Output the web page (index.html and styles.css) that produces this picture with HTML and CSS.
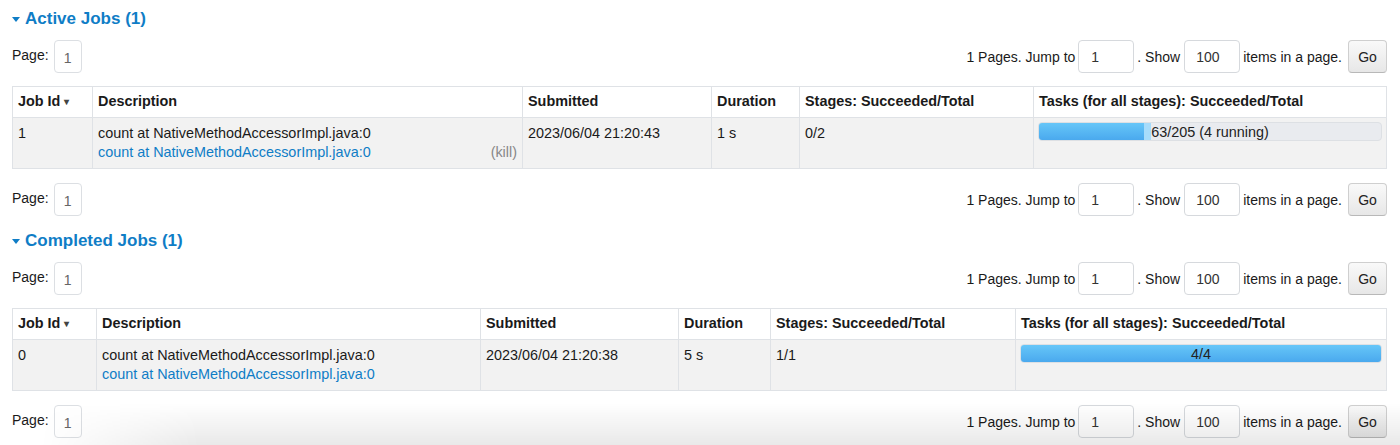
FILE: index.html
```html
<!DOCTYPE html>
<html>
<head>
<meta charset="utf-8">
<link rel="stylesheet" href="styles.css">
</head>
<body>
<div class="page">
  <h4 class="section-title"><span class="arrow"></span>Active Jobs (1)</h4>
  <div class="pager pager-top">
    <div class="pager-left"><span>Page:</span><span class="page-box">1</span></div>
    <div class="pager-right">
      <span>1 Pages. Jump to</span><span class="input">1</span><span>. Show</span><span class="input">100</span><span>items in a page.</span><span class="go">Go</span>
    </div>
  </div>
  <table class="jobs jobs-active">
    <colgroup><col class="a1"><col class="a2"><col class="a3"><col class="a4"><col class="a5"><col class="a6"></colgroup>
    <thead>
      <tr><th>Job Id <span class="sort">&#9662;</span></th><th>Description</th><th>Submitted</th><th>Duration</th><th>Stages: Succeeded/Total</th><th>Tasks (for all stages): Succeeded/Total</th></tr>
    </thead>
    <tbody>
      <tr>
        <td>1</td>
        <td><div>count at NativeMethodAccessorImpl.java:0</div><div class="desc-line"><a class="link">count at NativeMethodAccessorImpl.java:0</a><span class="kill">(kill)</span></div></td>
        <td>2023/06/04 21:20:43</td>
        <td>1 s</td>
        <td>0/2</td>
        <td class="task-cell"><div class="progress"><span class="progress-text">63/205 (4 running)</span><div class="bar done" style="width:30.73%"></div><div class="bar started" style="width:1.95%"></div></div></td>
      </tr>
    </tbody>
  </table>
  <div class="pager pager-bottom">
    <div class="pager-left"><span>Page:</span><span class="page-box">1</span></div>
    <div class="pager-right">
      <span>1 Pages. Jump to</span><span class="input">1</span><span>. Show</span><span class="input">100</span><span>items in a page.</span><span class="go">Go</span>
    </div>
  </div>

  <h4 class="section-title second"><span class="arrow"></span>Completed Jobs (1)</h4>
  <div class="pager pager-top">
    <div class="pager-left"><span>Page:</span><span class="page-box">1</span></div>
    <div class="pager-right">
      <span>1 Pages. Jump to</span><span class="input">1</span><span>. Show</span><span class="input">100</span><span>items in a page.</span><span class="go">Go</span>
    </div>
  </div>
  <table class="jobs jobs-done">
    <colgroup><col class="b1"><col class="b2"><col class="b3"><col class="b4"><col class="b5"><col class="b6"></colgroup>
    <thead>
      <tr><th>Job Id <span class="sort">&#9662;</span></th><th>Description</th><th>Submitted</th><th>Duration</th><th>Stages: Succeeded/Total</th><th>Tasks (for all stages): Succeeded/Total</th></tr>
    </thead>
    <tbody>
      <tr>
        <td>0</td>
        <td><div>count at NativeMethodAccessorImpl.java:0</div><div class="desc-line"><a class="link">count at NativeMethodAccessorImpl.java:0</a></div></td>
        <td>2023/06/04 21:20:38</td>
        <td>5 s</td>
        <td>1/1</td>
        <td class="task-cell"><div class="progress"><span class="progress-text">4/4</span><div class="bar done" style="width:100%"></div></div></td>
      </tr>
    </tbody>
  </table>
  <div class="pager pager-bottom">
    <div class="pager-left"><span>Page:</span><span class="page-box">1</span></div>
    <div class="pager-right">
      <span>1 Pages. Jump to</span><span class="input">1</span><span>. Show</span><span class="input">100</span><span>items in a page.</span><span class="go">Go</span>
    </div>
  </div>
</div>
<div class="shade"></div>
</body>
</html>
```
FILE: styles.css
```css
html, body {
  margin: 0;
  padding: 0;
  background: #fff;
}
body {
  font-family: "Liberation Sans", Arial, Helvetica, sans-serif;
  font-size: 14px;
  color: #1a1a1a;
}
.page {
  padding: 8px 13px 0 12px;
  display: flex;
  flex-direction: column;
}
.section-title {
  margin: 0;
  font-size: 17px;
  line-height: 22px;
  font-weight: bold;
  color: #0f7dc6;
  display: flex;
  align-items: center;
}
.section-title.second {
  margin-top: 14px;
}
.arrow {
  width: 0;
  height: 0;
  border-left: 4.5px solid transparent;
  border-right: 4.5px solid transparent;
  border-top: 5px solid #0f7dc6;
  margin-right: 5px;
  margin-top: 1px;
}
.pager {
  display: flex;
  justify-content: space-between;
  align-items: center;
  height: 33px;
}
.pager-top {
  margin: 10px 0 13px;
}
.pager-bottom {
  margin-top: 14px;
}
.pager-left, .pager-right {
  display: flex;
  align-items: center;
  height: 33px;
}
.pager-left span:first-child {
  margin-top: -3px;
}
.page-box {
  box-sizing: border-box;
  width: 28px;
  height: 33px;
  margin-left: 5px;
  border: 1px solid #dcdfe3;
  border-radius: 4px;
  display: flex;
  align-items: center;
  justify-content: center;
  color: #666;
  padding-top: 3px;
}
.input {
  box-sizing: border-box;
  width: 56px;
  height: 33px;
  border: 1px solid #d6d9dd;
  border-radius: 4px;
  display: flex;
  align-items: center;
  padding-left: 12px;
  margin: 0 3px;
  color: #333;
}
.input + span + .input {
  padding-left: 11px;
}
.pager-right .input:nth-child(4) {
  margin-left: 4px;
}
.go {
  box-sizing: border-box;
  width: 39px;
  height: 33px;
  margin-left: 6px;
  border: 1px solid #cfcfcf;
  border-bottom-color: #b8b8b8;
  border-radius: 4px;
  background: linear-gradient(#f9f9f9, #e7e7e7);
  display: flex;
  align-items: center;
  justify-content: center;
  color: #222;
}
.jobs {
  width: 100%;
  table-layout: fixed;
  border-collapse: collapse;
  border: 1px solid #dfe2e6;
  font-size: 14.4px;
}
.jobs th, .jobs td {
  border: 1px solid #dfe2e6;
  padding: 6px 5px;
  line-height: 19px;
  text-align: left;
  vertical-align: top;
  white-space: nowrap;
  overflow: hidden;
}
.jobs th {
  font-weight: bold;
  background: #fff;
  padding-top: 5px;
  padding-bottom: 6px;
}
.jobs tbody tr {
  background: #f2f2f2;
}
.jobs thead tr {
  height: 31px;
}
.jobs tbody tr {
  height: 49px;
}
.sort {
  font-size: 10px;
  color: #444;
  vertical-align: 1px;
}
.a1 { width: 80px; }
.a2 { width: 430px; }
.a3 { width: 189px; }
.a4 { width: 88px; }
.a5 { width: 234px; }
.a6 { width: auto; }
.b1 { width: 84px; }
.b2 { width: 384px; }
.b3 { width: 198px; }
.b4 { width: 92px; }
.b5 { width: 245px; }
.b6 { width: auto; }
.desc-line {
  display: flex;
  justify-content: space-between;
}
.link {
  color: #0f7dc6;
  text-decoration: none;
}
.kill {
  color: #888;
}
.jobs td.task-cell {
  padding: 4px 4px 6px;
}
.progress {
  position: relative;
  height: 19px;
  box-sizing: border-box;
  border-radius: 4px;
  background: #e9ebef;
  border: 1px solid #dde0e4;
  display: flex;
  overflow: hidden;
}
.progress-text {
  position: absolute;
  left: 0;
  right: 0;
  top: 0;
  line-height: 18px;
  text-align: center;
  color: #222;
  z-index: 1;
}
.bar {
  height: 100%;
}
.bar.done {
  background: linear-gradient(#66c6f8, #4aa9ee);
}
.bar.started {
  background: #a6dcfb;
}
.shade {
  position: fixed;
  left: 40px;
  right: 0;
  bottom: 0;
  height: 42px;
  background: linear-gradient(rgba(0,0,0,0), rgba(0,0,0,0.085));
  -webkit-mask-image: linear-gradient(to right, transparent 0, #000 160px);
  mask-image: linear-gradient(to right, transparent 0, #000 160px);
  pointer-events: none;
}
```
